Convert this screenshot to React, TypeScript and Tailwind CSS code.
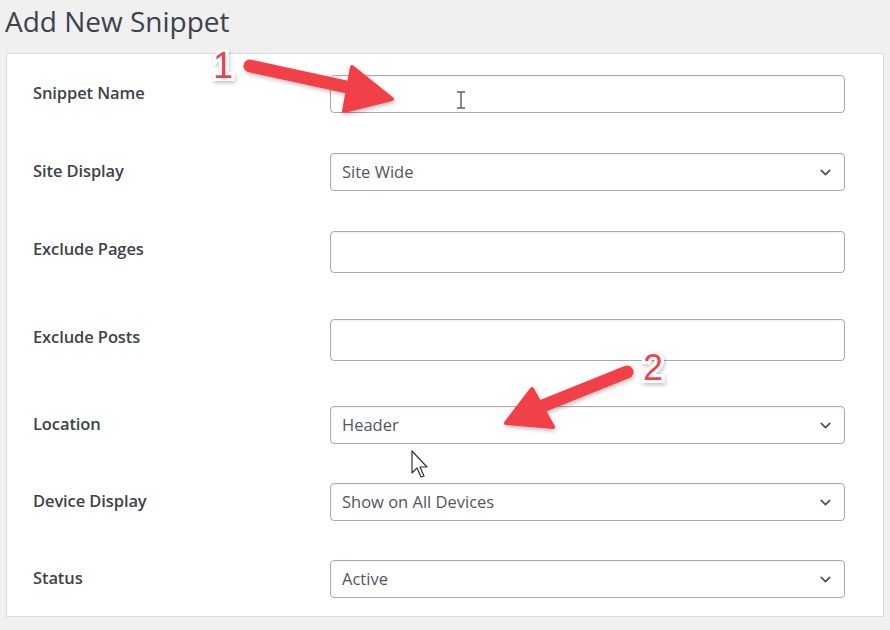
import { ChevronDown } from "lucide-react"

type Field = {
  label: string
  kind: "text" | "select"
  value?: string
  tall?: boolean
  gap: string
}

const fields: Field[] = [
  { label: "Snippet Name", kind: "text", gap: "mt-[21px]" },
  { label: "Site Display", kind: "select", value: "Site Wide", gap: "mt-[40px]" },
  { label: "Exclude Pages", kind: "text", tall: true, gap: "mt-[40px]" },
  { label: "Exclude Posts", kind: "text", tall: true, gap: "mt-[46px]" },
  { label: "Location", kind: "select", value: "Header", gap: "mt-[45px]" },
  { label: "Device Display", kind: "select", value: "Show on All Devices", gap: "mt-[39px]" },
  { label: "Status", kind: "select", value: "Active", gap: "mt-[39px]" },
]

function Row({ field }: { field: Field }) {
  return (
    <div className={`flex items-start ${field.gap}`}>
      <div className="w-[323px] shrink-0 pl-[26px] pt-[7px] text-[16.5px] leading-[22px] font-semibold tracking-[-0.1px] text-[#3c434a]">
        {field.label}
      </div>
      <div
        className={`flex w-[515px] items-center justify-between rounded-[4px] border border-[#a7aaad] bg-white pl-[11px] pr-[10px] shadow-[inset_0_1px_2px_rgba(0,0,0,0.06)] ${
          field.tall ? "h-[42px]" : "h-[38px]"
        }`}
      >
        <span className="text-[16.5px] text-[#50575e]">{field.value ?? ""}</span>
        {field.kind === "select" && (
          <ChevronDown className="h-[17px] w-[17px] text-[#50575e]" strokeWidth={2.5} />
        )}
      </div>
    </div>
  )
}

function Arrows() {
  return (
    <svg
      className="pointer-events-none absolute left-0 top-0"
      width="890"
      height="630"
      viewBox="0 0 890 630"
    >
      <defs>
        <filter id="sh" x="-20%" y="-20%" width="140%" height="140%">
          <feDropShadow dx="1" dy="2" stdDeviation="2" floodColor="#000" floodOpacity="0.25" />
        </filter>
      </defs>
      <g filter="url(#sh)" fill="#f2404a" stroke="#f2404a" strokeLinecap="round" strokeLinejoin="round">
        <line x1="250" y1="66" x2="356" y2="89" strokeWidth="13" />
        <polygon points="352,67 344,111 392,99" strokeWidth="4" />
        <line x1="627" y1="372" x2="540" y2="407" strokeWidth="13" />
        <polygon points="532,389 553,427 506,423" strokeWidth="4" />
      </g>
      <g
        fontFamily="'Liberation Sans', Arial, sans-serif"
        fontSize="36"
        fill="#f2404a"
        stroke="#fff"
        strokeWidth="6"
        paintOrder="stroke"
        filter="url(#sh)"
      >
        <text x="213" y="78">1</text>
        <text x="643" y="380">2</text>
      </g>
      {/* I-beam cursor */}
      <g stroke="#6b6b6b" strokeWidth="1.6" fill="none">
        <line x1="461" y1="92" x2="461" y2="108" />
        <line x1="457" y1="92" x2="465" y2="92" />
        <line x1="457" y1="108" x2="465" y2="108" />
      </g>
      {/* Pointer cursor */}
      <path
        d="M412 451 L412 473 L417 468 L421 477 L424 476 L420 467 L427 467 Z"
        fill="#fff"
        stroke="#333"
        strokeWidth="1.2"
        strokeLinejoin="round"
      />
    </svg>
  )
}

export default function App() {
  return (
    <div className="relative h-[630px] w-[890px] overflow-hidden bg-[#f0f0f1] font-['Open_Sans',sans-serif]">
      <h1 className="pl-[5px] pt-[2px] text-[28px] leading-[38px] text-[#3c434a]">Add New Snippet</h1>
      <div className="ml-[6px] mt-[13px] h-[564px] w-[878px] border border-[#dcdcde] bg-white">
        {fields.map((f) => (
          <Row key={f.label} field={f} />
        ))}
      </div>
      <Arrows />
    </div>
  )
}
